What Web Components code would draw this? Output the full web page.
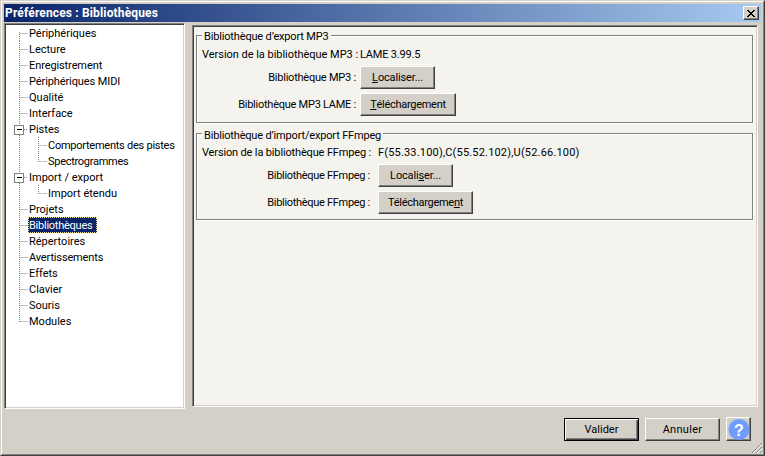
<!DOCTYPE html>
<html lang="fr"><head><meta charset="utf-8"><title>Préférences : Bibliothèques</title>
<style>html,body{margin:0;padding:0;background:#d4d0c8}body{font:11px Roboto,sans-serif;color:#000}</style></head>
<body>
<pref-window>
  <span slot="title" style="letter-spacing:.15px">Préférences : Bibliothèques</span>
  <pref-tree slot="tree">
    <tree-row label="Périphériques" pos="first"></tree-row>
    <tree-row label="Lecture"></tree-row>
    <tree-row label="Enregistrement" style="letter-spacing:-.1px"></tree-row>
    <tree-row label="Périphériques MIDI" style="letter-spacing:-.1px"></tree-row>
    <tree-row label="Qualité"></tree-row>
    <tree-row label="Interface"></tree-row>
    <tree-row label="Pistes" expander></tree-row>
    <tree-row label="Comportements des pistes" level="2" style="letter-spacing:-.25px"></tree-row>
    <tree-row label="Spectrogrammes" level="2" pos="last" style="letter-spacing:-.28px"></tree-row>
    <tree-row label="Import / export" expander></tree-row>
    <tree-row label="Import étendu" level="2" pos="last"></tree-row>
    <tree-row label="Projets"></tree-row>
    <tree-row label="Bibliothèques" selected style="letter-spacing:-.25px"></tree-row>
    <tree-row label="Répertoires"></tree-row>
    <tree-row label="Avertissements" style="letter-spacing:-.15px"></tree-row>
    <tree-row label="Effets"></tree-row>
    <tree-row label="Clavier"></tree-row>
    <tree-row label="Souris"></tree-row>
    <tree-row label="Modules" pos="end"></tree-row>
  </pref-tree>
  <pref-group slot="panel" legend="Bibliothèque d’export MP3" style="--col:154px;--gap:4px;--lls:-.16px;--lt:-7px;--h:88px">
    <span class="v" style="letter-spacing:-.03px">Version de la bibliothèque MP3 :</span><span class="v" style="letter-spacing:-.2px">LAME 3.99.5</span>
    <span class="r" style="letter-spacing:-.22px">Bibliothèque MP3 :</span><win-button style="--w:75px;letter-spacing:-.15px"><u>L</u>ocaliser...</win-button>
    <span class="r" style="letter-spacing:-.25px">Bibliothèque MP3 LAME :</span><win-button style="--w:96px;letter-spacing:-.28px"><u>T</u>éléchargement</win-button>
  </pref-group>
  <pref-group slot="panel" legend="Bibliothèque d’import/export FFmpeg" style="--col:168px;--gap:8px;--lls:-.17px;--lt:-6px;--h:87px">
    <span class="v" style="letter-spacing:-.15px">Version de la bibliothèque FFmpeg :</span><span class="v" style="letter-spacing:.18px">F(55.33.100),C(55.52.102),U(52.66.100)</span>
    <span class="r" style="letter-spacing:-.3px">Bibliothèque FFmpeg :</span><win-button style="--w:75px;letter-spacing:-.15px">Locali<u>s</u>er...</win-button>
    <span class="r" style="letter-spacing:-.3px">Bibliothèque FFmpeg :</span><win-button style="--w:95px;letter-spacing:-.28px">Téléchargeme<u>n</u>t</win-button>
  </pref-group>
  <win-button slot="footer" default style="--w:75px">Valider</win-button>
  <win-button slot="footer" style="--w:75px;letter-spacing:.3px">Annuler</win-button>
  <help-button slot="footer"></help-button>
</pref-window>
<script>
function def(name, css, html, init){
  customElements.define(name, class extends HTMLElement{
    connectedCallback(){
      if(this.shadowRoot) return;
      const r=this.attachShadow({mode:'open'});
      r.innerHTML='<style>'+css+'</style>'+(typeof html==='function'?html(this):html);
      if(init) init(this,r);
    }
  });
}
def('pref-window',`
:host{display:flex;flex-direction:column;width:765px;height:456px;box-sizing:border-box;position:relative;background:#d4d0c8;overflow:hidden;
 border:1px solid;border-color:#d4d0c8 #404040 #404040 #d4d0c8;font:11px Roboto,sans-serif}
.in{flex:1;display:flex;flex-direction:column;border:1px solid;border-color:#fff #808080 #808080 #fff;padding:2px;min-height:0}
.title{height:18px;flex:none;display:flex;align-items:center;justify-content:space-between;padding:0 2px 0 1px;background:linear-gradient(90deg,#0a246a,#a6caf0);color:#fff;font-weight:700;font-size:12px}
.x{width:16px;height:14px;box-sizing:border-box;background:#d4d0c8;border:1px solid;border-color:#fff #404040 #404040 #fff;box-shadow:inset -1px -1px #808080;display:flex;align-items:center;justify-content:center}
.main{display:flex;gap:7px;padding-top:1px;height:386px;flex:none}
.tree{width:181px;height:386px;flex:none;display:block}
.panel{flex:none;width:566px;height:382px;margin-top:2px;box-sizing:border-box;border:1px solid;border-color:#808080 #fff #fff #808080;box-shadow:inset 1px 1px #404040,inset -1px -1px #d4d0c8;background:#f4f3ee;padding:9px 4px 0 3px;display:flex;flex-direction:column;gap:10px}
.foot{flex:1;display:flex;justify-content:flex-end;align-items:flex-start;gap:6px;padding:9px 10px 0 0}
.grip{position:absolute;right:1px;bottom:1px}
`,`<div class="in">
<div class="title"><slot name="title"></slot><div class="x"><svg width="8" height="7" viewBox="0 0 8 7" shape-rendering="crispEdges"><path d="M0 0h2v1h1v1h2V1h1V0h2v1H7v1H6v1H5v1h1v1h1v1h1v1H6V6H5V5H3v1H2v1H0V6h1V5h1V4h1V3H2V2H1V1H0z"/></svg></div></div>
<div class="main"><div class="tree"><slot name="tree"></slot></div><div class="panel"><slot name="panel"></slot></div></div>
<div class="foot"><slot name="footer"></slot></div>
</div>
<svg class="grip" width="12" height="12" viewBox="0 0 12 12"><path d="M11 1L1 11M11 5L5 11M11 9L9 11" stroke="#808080" fill="none"/><path d="M11 2L2 11M11 6L6 11M11 10L10 11" stroke="#fff" fill="none"/></svg>`);
def('pref-tree',`
:host{display:block;box-sizing:border-box;height:386px;background:#fff;border:1px solid;border-color:#808080 #fff #fff #808080;box-shadow:inset 1px 1px #404040,inset -1px -1px #d4d0c8;padding:1px}
`,`<slot></slot>`);
def('tree-row',`
:host{display:flex;align-items:center;height:16px;position:relative}
svg{flex:none;display:block}
.t{white-space:nowrap;line-height:15px;height:14px;border:1px solid transparent;margin-left:-3px}
.sel{background:#0a246a;color:#fff;border:1px dotted #f4e08a;padding-right:4px}
`,el=>{
  const lvl=+(el.getAttribute('level')||1),pos=el.getAttribute('pos')||'';
  const X1=13.5,X2=32.5,Y=8.5;
  const dot='stroke="#808080" stroke-dasharray="1 1" fill="none"';
  let p='';
  const y1=pos==='first'&&lvl===1?7:0, y2=pos==='end'?9:16;
  p+=`<path d="M${X1} ${y1}V${y2}" ${dot}/>`;
  if(lvl===1) p+=`<path d="M${el.hasAttribute('expander')?18:X1+1} ${Y}H22" ${dot}/>`;
  if(lvl===2) p+=`<path d="M${X2} 0V${pos==='last'?9:16}M${X2+1} ${Y}H41" ${dot}/>`;
  if(el.hasAttribute('expander')) p+=`<rect x="8.5" y="4.5" width="9" height="9" fill="#fff" stroke="#808080"/><path d="M11 8.5H16" stroke="#000"/>`;
  const w=lvl===1?25:44;
  const sel=el.hasAttribute('selected');
  return `<svg width="${w}" height="16" viewBox="0 0 ${w} 16">${p}</svg><span class="t ${sel?'sel':''}">${el.getAttribute('label')}</span>`;
});
def('pref-group',`
:host{display:block;box-sizing:border-box;height:var(--h);position:relative;border:1px solid #808080;box-shadow:inset 1px 1px #fff,1px 1px #fff;padding:10px 0 0 5px}
.l{position:absolute;left:5px;top:var(--lt);background:#f4f3ee;padding:0 2px;line-height:15px;white-space:nowrap;letter-spacing:var(--lls)}
.g{display:grid;grid-template-columns:var(--col) auto;column-gap:var(--gap);grid-template-rows:16px 23px 23px;row-gap:4px;justify-content:start;align-items:center;justify-items:start;white-space:nowrap}
::slotted(.v){padding-top:1px}
::slotted(.r){justify-self:end}
`,el=>`<div class="l">${el.getAttribute('legend')}</div><div class="g"><slot></slot></div>`);
def('win-button',`
:host{display:inline-flex;align-items:center;justify-content:center;box-sizing:border-box;width:var(--w);height:23px;background:#d4d0c8;border:1px solid;border-color:#fff #404040 #404040 #fff;box-shadow:inset -1px -1px #808080;white-space:nowrap;font:inherit;color:#000}
:host([default]){border:1px solid #000;box-shadow:inset 1px 1px #fff,inset -1px -1px #404040,inset -2px -2px #808080}
`,`<slot></slot>`);
def('help-button',`
:host{display:flex;align-items:center;justify-content:center;box-sizing:border-box;width:25px;height:24px;margin-top:-1px;background:#d4d0c8;border:1px solid;border-color:#fff #404040 #404040 #fff;box-shadow:inset -1px -1px #808080}
svg{display:block}
text{font:700 16px "Liberation Sans",sans-serif;fill:#fff}
`,`<svg width="22" height="21" viewBox="0 0 22 21"><circle cx="11" cy="10.5" r="10.5" fill="#6f9dff"/><text x="11" y="16.5" text-anchor="middle">?</text></svg>`);
</script>
</body></html>
